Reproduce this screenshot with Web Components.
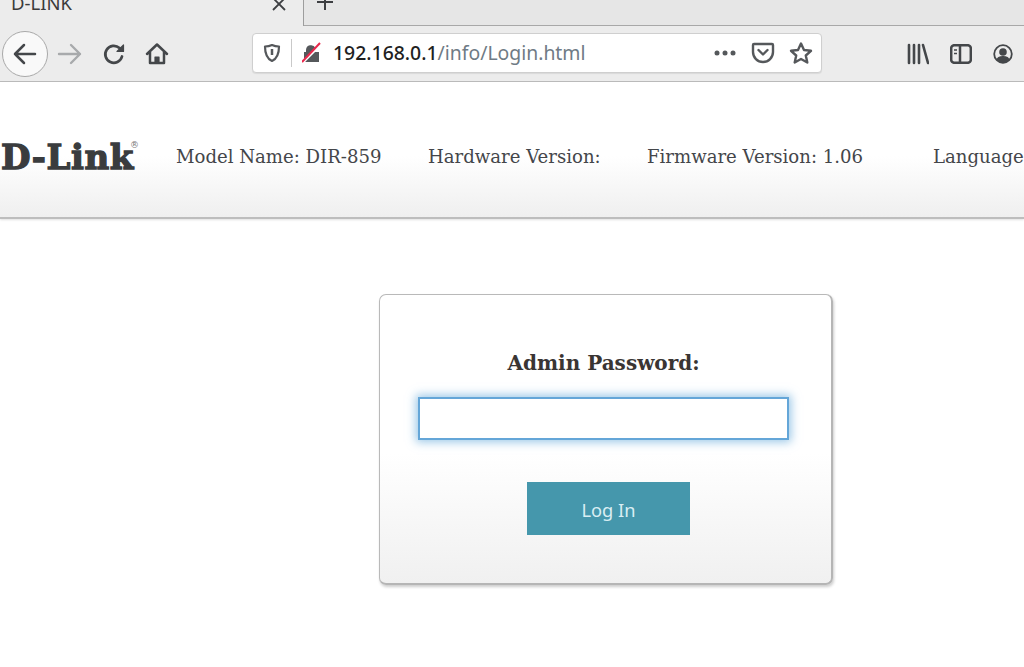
<!DOCTYPE html>
<html><head><meta charset="utf-8"><title>D-LINK</title>
<style>
html,body{margin:0;padding:0;width:1024px;height:667px;overflow:hidden;background:#fff}
browser-chrome,router-header,login-card{display:block}
</style></head><body>
<browser-chrome></browser-chrome>
<router-header></router-header>
<login-card></login-card>
<template id="chrome">
<style>
:host{display:block;background:#ececec;font-family:"Noto Sans","Open Sans",sans-serif;color:#3d3f42}
.tabs{height:26px;display:flex;box-sizing:border-box;overflow:hidden}
.tab{width:304px;flex:none;box-sizing:border-box;height:26px;display:flex;align-items:flex-start;justify-content:space-between;padding:0 16px 0 11px;background:#ececec;border-right:1px solid #9d9d9d}
.tab span{font-size:18.500px;line-height:18px;margin-top:-6px;color:#3b3b3b}
.tab svg{margin-top:-3px}
.rest{flex:1;background:#e6e6e6;border-bottom:1px solid #a8a8a8;padding-left:12px}
.bar{height:56px;box-sizing:border-box;border-bottom:1px solid #bcbcbc;display:flex;align-items:center;padding-left:2px}
.back{width:46px;height:46px;border-radius:50%;border:1px solid #a9a9a9;background:#f9f9f9;display:flex;align-items:center;justify-content:center;box-sizing:border-box;margin-right:3px}
.btn{display:flex;align-items:center;justify-content:center}
.url{margin-left:77px;width:570px;height:40px;box-sizing:border-box;background:#fff;border:1px solid #cfcfcf;border-radius:4px;display:flex;align-items:center;font-size:19.400px;box-shadow:0 1px 1px rgba(0,0,0,.08);margin-top:-2px}
.sep{width:1px;height:28px;background:#c9c9c9;margin:0 10px 0 10px}
.host{color:#1f1f1f;margin-left:11px;font-weight:500}
.path{color:#6f7b85}
.grow{flex:1}
.right{display:flex;align-items:center;margin-left:85px;gap:21px}
</style>
<div class="tabs">
<div class="tab"><span>D-LINK</span><svg width="16" height="16" viewBox="0 0 16 16" fill="none" stroke="#3d3f42" stroke-width="1.800"><path d="M2 1l12 12M14 1L2 13"/></svg></div>
<div class="rest"><svg width="20" height="20" viewBox="0 0 20 20" style="margin-left:-1px;margin-top:-7px;display:block" fill="none" stroke="#3d3f42" stroke-width="2"><path d="M10 1v16M2 9h16"/></svg></div>
</div>
<div class="bar">
<div class="back"><svg width="26" height="24" viewBox="0 0 26 24" fill="none" stroke="#44474a" stroke-width="2.500" stroke-linecap="round" stroke-linejoin="round"><path d="M3 12h20M12 3l-9 9 9 9"/></svg></div>
<div class="btn" style="width:38px"><svg width="26" height="24" viewBox="0 0 26 24" fill="none" stroke="#a8aaac" stroke-width="2.400" stroke-linecap="round" stroke-linejoin="round"><path d="M2 12h21M14 3l9 9-9 9"/></svg></div>
<div class="btn" style="width:50px"><svg width="24" height="24" viewBox="0 0 24 24" fill="none" stroke="#44474a" stroke-width="2.700" stroke-linecap="round" stroke-linejoin="round"><path d="M20 14.500a8.500 8.500 0 1 1-2.500-8.500L20 8.500"/><path d="M21.500 3v6.500h-6.500z" fill="#44474a" stroke-width="1.200"/></svg></div>
<div class="btn" style="width:36px"><svg width="24" height="24" viewBox="0 0 24 24" fill="none" stroke="#44474a" stroke-width="2.500" stroke-linejoin="round" stroke-linecap="round"><path d="M2 12L12 2.500 22 12M5 10v11h14V10"/><path d="M10 21v-6h4v6" fill="#44474a" stroke-width="1.200"/></svg></div>
<div class="url">
<svg style="margin-left:10px" width="18" height="20" viewBox="0 0 18 20" fill="none" stroke="#55585b" stroke-width="2.200"><path d="M9 2c2.500 1.200 5 1.500 7 1.500 0 7-1.500 12-7 14.500C3.500 15.500 2 10.500 2 3.500 4 3.500 6.500 3.200 9 2z" stroke-linejoin="round"/><path d="M9 6v6" stroke-width="2.500"/></svg>
<div class="sep"></div>
<svg width="20" height="22" viewBox="0 0 20 22"><path d="M4 10V8a5 5 0 0 1 9.500-2L13 10zM2 10h15v10H2z" fill="#55585b"/><path d="M0 21L19 2" stroke="#fff" stroke-width="3"/><path d="M0 20L18 1" stroke="#e8274b" stroke-width="2"/></svg>
<span class="host">192.168.0.1</span><span class="path">/info/Login.html</span>
<span class="grow"></span>
<svg width="24" height="6" viewBox="0 0 24 6" fill="#55585b"><circle cx="4" cy="3" r="2.500"/><circle cx="12" cy="3" r="2.500"/><circle cx="20" cy="3" r="2.500"/></svg>
<svg style="margin-left:14px" width="24" height="22" viewBox="0 0 24 22" fill="none" stroke="#55585b" stroke-width="2.400" stroke-linecap="round" stroke-linejoin="round"><path d="M3 2h18a1 1 0 0 1 1 1v7a10 10 0 0 1-20 0V3a1 1 0 0 1 1-1z"/><path d="M7.500 8l4.500 4.500L16.500 8"/></svg>
<svg style="margin-left:14px;margin-right:8px" width="24" height="24" viewBox="0 0 24 24" fill="none" stroke="#55585b" stroke-width="2.400" stroke-linejoin="round"><path d="M12 2.500l3 6.500 7 .8-5.200 4.700 1.500 7L12 18l-6.300 3.500 1.500-7L2 9.800 9 9z"/></svg>
</div>
<div class="right">
<svg width="22" height="22" viewBox="0 0 22 22" fill="none" stroke="#44474a" stroke-width="2.600" stroke-linecap="round"><path d="M2 2v18M7 2v18M12 2v18M16 2l5 18"/></svg>
<svg width="22" height="20" viewBox="0 0 22 20" fill="none" stroke="#44474a" stroke-width="2.500"><rect x="1.200" y="1.200" width="19.600" height="17.600" rx="3"/><path d="M10 1v18"/><path d="M4 6h3M4 9.500h3" stroke-width="1.600"/></svg>
<svg width="20" height="20" viewBox="0 0 20 20"><circle cx="10" cy="10" r="8.800" fill="none" stroke="#44474a" stroke-width="1.800"/><circle cx="10" cy="8" r="3.800" fill="#44474a"/><path d="M3.500 15.500c1-3 4-3.500 6.500-3.500s5.500 .5 6.500 3.500a8.500 8.500 0 0 1-13 0z" fill="#44474a"/></svg>
</div>
</div>
</template>
<template id="header">
<style>
:host{display:block;height:137px;box-sizing:border-box;background:linear-gradient(#fff 0,#fff 55%,#efefef 100%);border-bottom:2px solid #bdbdbd;box-shadow:0 1px 2px rgba(0,0,0,.12);overflow:hidden;font-family:"DejaVu Serif","Liberation Serif",serif;font-size:18.100px;color:#44464a;white-space:nowrap}
.row{display:flex;align-items:center;height:149px}
.logo{font-weight:700;font-size:34px;letter-spacing:.6px;color:#3a3c3e;-webkit-text-stroke:1.300px #3a3c3e;margin-left:1px;width:175px;flex:none;position:relative;line-height:1}
.logo sup{position:absolute;left:129px;top:1px;font-size:9px;letter-spacing:0;-webkit-text-stroke:0;color:#777;line-height:1;font-weight:400}
span{flex:none}
</style>
<div class="row"><div class="logo">D-Link<sup>®</sup></div>
<span style="width:252px">Model Name: DIR-859</span><span style="width:219px">Hardware Version:</span><span style="width:286px">Firmware Version: 1.06</span><span>Language</span></div>
</template>
<template id="card">
<style>
:host{display:block;padding:75px 0 0 379px}
.box{width:454px;height:291px;box-sizing:border-box;border:1px solid #b9b9b9;border-right:2px solid #b5b5b5;border-bottom:2px solid #b5b5b5;border-radius:7px;background:linear-gradient(#fff 0,#fff 55%,#f0f0f0 100%);box-shadow:1px 2px 3px rgba(0,0,0,.2);display:flex;flex-direction:column;padding:56px 0 0 38px}
label{font:700 20px/24px "DejaVu Serif",serif;color:#3a3533;width:371px;text-align:center;white-space:nowrap}
input{display:block;width:371px;height:43px;box-sizing:border-box;margin-top:22px;border:2px solid #64a6d8;background:#fff;outline:0;padding:0;box-shadow:0 0 9px 2px rgba(85,160,215,.6)}
button{display:block;margin:42px 0 0 109px;width:163px;height:53px;border:0;background:#4597ac;color:#d9eef3;font:18.300px "Noto Sans","Open Sans",sans-serif;padding:1px 0 0}
</style>
<div class="box"><label>Admin Password:</label><input type="password"><button>Log In</button></div>
</template>
<script>
for (const [tag,id] of [['browser-chrome','chrome'],['router-header','header'],['login-card','card']]) {
  customElements.define(tag, class extends HTMLElement {
    constructor(){super();this.attachShadow({mode:'open'}).appendChild(document.getElementById(id).content.cloneNode(true));}
  });
}
</script>
</body></html>
